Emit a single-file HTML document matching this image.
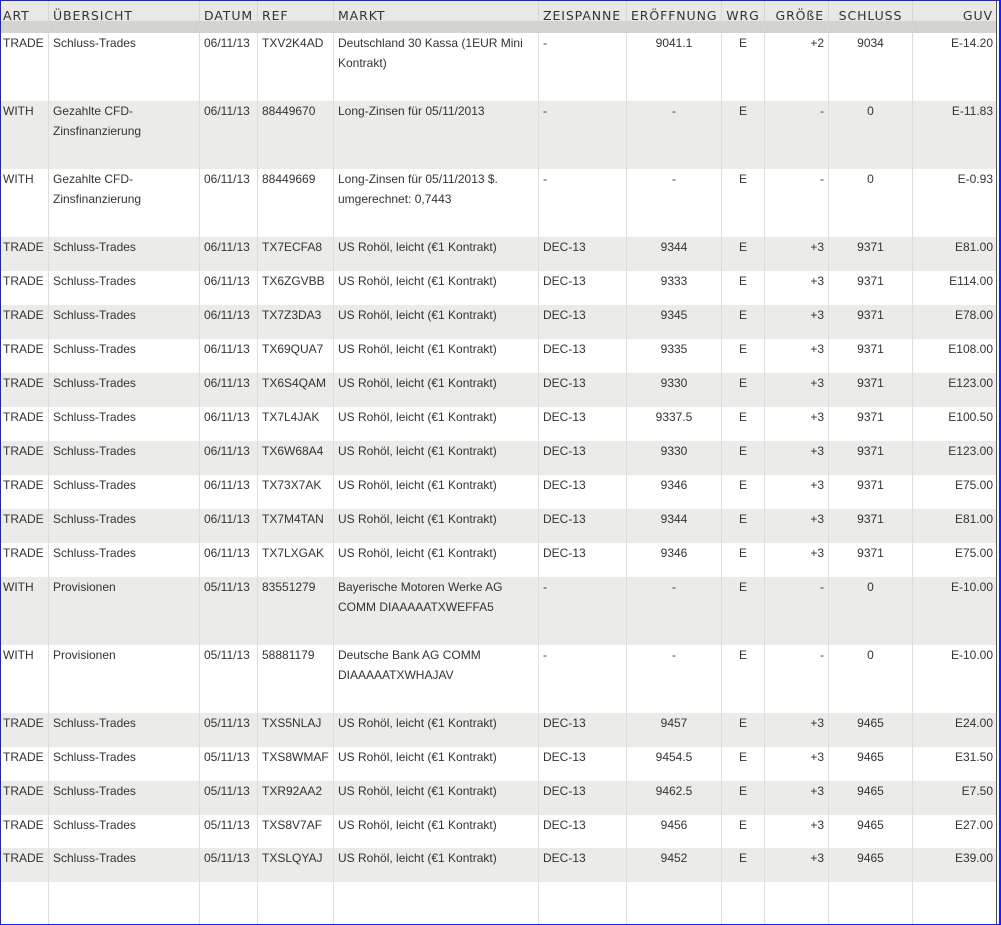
<!DOCTYPE html>
<html><head><meta charset="utf-8"><style>
*{box-sizing:border-box;margin:0;padding:0}
body{width:1001px;height:925px;overflow:hidden;background:#fff;font-family:"Liberation Sans",Arial,sans-serif;font-size:12px;color:#333;position:relative}
#frame{position:absolute;left:0;top:0;width:1001px;height:925px;border:1px solid #1a1aff;border-right:2px solid #1a1aff;pointer-events:none;z-index:5}
#rline{position:absolute;left:996px;top:0;width:1px;height:925px;background:#555;z-index:4}
.row{display:flex;position:absolute;left:0;width:997px}
.c{height:100%;border-left:1px solid #ddd;padding:0 4px;line-height:20px;overflow:hidden}
.c:first-child{border-left:none;padding-left:3px}
.w0{width:48px}.w1{width:151px}.w2{width:58px}.w3{width:76px}.w4{width:205px}.w5{width:88px}.w6{width:95px;text-align:center}.w7{width:43px;text-align:center}.w8{width:64px;text-align:right}.w9{width:84px;text-align:center}.w10{width:85px;text-align:right}
.hd .c{font-family:"DejaVu Sans",sans-serif;font-size:12.5px;letter-spacing:.9px;color:#333;line-height:32px;border-left-color:#d6d6d2;height:32px;white-space:nowrap;overflow:visible}
.band{position:absolute;left:0;top:21px;width:997px;height:12px;background:#d3d3cf}
.g{background:#ebebe7}
</style></head><body>
<div style="position:absolute;left:0;top:0;width:997px;height:21px;background:#e8e8e4"></div>
<div class="band"></div>
<div class="row hd" style="top:0;height:32px">
<div class="c w0">ART</div><div class="c w1">ÜBERSICHT</div><div class="c w2">DATUM</div><div class="c w3">REF</div><div class="c w4">MARKT</div><div class="c w5">ZEISPANNE</div><div class="c w6" style="text-align:left">ERÖFFNUNG</div><div class="c w7">WRG</div><div class="c w8">GRÖßE</div><div class="c w9">SCHLUSS</div><div class="c w10">GUV</div>
</div>

<div class="row" style="top:33px;height:68px"><div class="c w0">TRADE</div><div class="c w1">Schluss-Trades</div><div class="c w2">06/11/13</div><div class="c w3">TXV2K4AD</div><div class="c w4">Deutschland 30 Kassa (1EUR Mini Kontrakt)</div><div class="c w5">-</div><div class="c w6">9041.1</div><div class="c w7">E</div><div class="c w8">+2</div><div class="c w9">9034</div><div class="c w10">E-14.20</div></div>
<div class="row g" style="top:101px;height:68px"><div class="c w0">WITH</div><div class="c w1">Gezahlte CFD-Zinsfinanzierung</div><div class="c w2">06/11/13</div><div class="c w3">88449670</div><div class="c w4">Long-Zinsen für 05/11/2013</div><div class="c w5">-</div><div class="c w6">-</div><div class="c w7">E</div><div class="c w8">-</div><div class="c w9">0</div><div class="c w10">E-11.83</div></div>
<div class="row" style="top:169px;height:68px"><div class="c w0">WITH</div><div class="c w1">Gezahlte CFD-Zinsfinanzierung</div><div class="c w2">06/11/13</div><div class="c w3">88449669</div><div class="c w4">Long-Zinsen für 05/11/2013 $. umgerechnet: 0,7443</div><div class="c w5">-</div><div class="c w6">-</div><div class="c w7">E</div><div class="c w8">-</div><div class="c w9">0</div><div class="c w10">E-0.93</div></div>
<div class="row g" style="top:237px;height:34px"><div class="c w0">TRADE</div><div class="c w1">Schluss-Trades</div><div class="c w2">06/11/13</div><div class="c w3">TX7ECFA8</div><div class="c w4">US Rohöl, leicht (€1 Kontrakt)</div><div class="c w5">DEC-13</div><div class="c w6">9344</div><div class="c w7">E</div><div class="c w8">+3</div><div class="c w9">9371</div><div class="c w10">E81.00</div></div>
<div class="row" style="top:271px;height:34px"><div class="c w0">TRADE</div><div class="c w1">Schluss-Trades</div><div class="c w2">06/11/13</div><div class="c w3">TX6ZGVBB</div><div class="c w4">US Rohöl, leicht (€1 Kontrakt)</div><div class="c w5">DEC-13</div><div class="c w6">9333</div><div class="c w7">E</div><div class="c w8">+3</div><div class="c w9">9371</div><div class="c w10">E114.00</div></div>
<div class="row g" style="top:305px;height:34px"><div class="c w0">TRADE</div><div class="c w1">Schluss-Trades</div><div class="c w2">06/11/13</div><div class="c w3">TX7Z3DA3</div><div class="c w4">US Rohöl, leicht (€1 Kontrakt)</div><div class="c w5">DEC-13</div><div class="c w6">9345</div><div class="c w7">E</div><div class="c w8">+3</div><div class="c w9">9371</div><div class="c w10">E78.00</div></div>
<div class="row" style="top:339px;height:34px"><div class="c w0">TRADE</div><div class="c w1">Schluss-Trades</div><div class="c w2">06/11/13</div><div class="c w3">TX69QUA7</div><div class="c w4">US Rohöl, leicht (€1 Kontrakt)</div><div class="c w5">DEC-13</div><div class="c w6">9335</div><div class="c w7">E</div><div class="c w8">+3</div><div class="c w9">9371</div><div class="c w10">E108.00</div></div>
<div class="row g" style="top:373px;height:34px"><div class="c w0">TRADE</div><div class="c w1">Schluss-Trades</div><div class="c w2">06/11/13</div><div class="c w3">TX6S4QAM</div><div class="c w4">US Rohöl, leicht (€1 Kontrakt)</div><div class="c w5">DEC-13</div><div class="c w6">9330</div><div class="c w7">E</div><div class="c w8">+3</div><div class="c w9">9371</div><div class="c w10">E123.00</div></div>
<div class="row" style="top:407px;height:34px"><div class="c w0">TRADE</div><div class="c w1">Schluss-Trades</div><div class="c w2">06/11/13</div><div class="c w3">TX7L4JAK</div><div class="c w4">US Rohöl, leicht (€1 Kontrakt)</div><div class="c w5">DEC-13</div><div class="c w6">9337.5</div><div class="c w7">E</div><div class="c w8">+3</div><div class="c w9">9371</div><div class="c w10">E100.50</div></div>
<div class="row g" style="top:441px;height:34px"><div class="c w0">TRADE</div><div class="c w1">Schluss-Trades</div><div class="c w2">06/11/13</div><div class="c w3">TX6W68A4</div><div class="c w4">US Rohöl, leicht (€1 Kontrakt)</div><div class="c w5">DEC-13</div><div class="c w6">9330</div><div class="c w7">E</div><div class="c w8">+3</div><div class="c w9">9371</div><div class="c w10">E123.00</div></div>
<div class="row" style="top:475px;height:34px"><div class="c w0">TRADE</div><div class="c w1">Schluss-Trades</div><div class="c w2">06/11/13</div><div class="c w3">TX73X7AK</div><div class="c w4">US Rohöl, leicht (€1 Kontrakt)</div><div class="c w5">DEC-13</div><div class="c w6">9346</div><div class="c w7">E</div><div class="c w8">+3</div><div class="c w9">9371</div><div class="c w10">E75.00</div></div>
<div class="row g" style="top:509px;height:34px"><div class="c w0">TRADE</div><div class="c w1">Schluss-Trades</div><div class="c w2">06/11/13</div><div class="c w3">TX7M4TAN</div><div class="c w4">US Rohöl, leicht (€1 Kontrakt)</div><div class="c w5">DEC-13</div><div class="c w6">9344</div><div class="c w7">E</div><div class="c w8">+3</div><div class="c w9">9371</div><div class="c w10">E81.00</div></div>
<div class="row" style="top:543px;height:34px"><div class="c w0">TRADE</div><div class="c w1">Schluss-Trades</div><div class="c w2">06/11/13</div><div class="c w3">TX7LXGAK</div><div class="c w4">US Rohöl, leicht (€1 Kontrakt)</div><div class="c w5">DEC-13</div><div class="c w6">9346</div><div class="c w7">E</div><div class="c w8">+3</div><div class="c w9">9371</div><div class="c w10">E75.00</div></div>
<div class="row g" style="top:577px;height:68px"><div class="c w0">WITH</div><div class="c w1">Provisionen</div><div class="c w2">05/11/13</div><div class="c w3">83551279</div><div class="c w4">Bayerische Motoren Werke AG COMM DIAAAAATXWEFFA5</div><div class="c w5">-</div><div class="c w6">-</div><div class="c w7">E</div><div class="c w8">-</div><div class="c w9">0</div><div class="c w10">E-10.00</div></div>
<div class="row" style="top:645px;height:68px"><div class="c w0">WITH</div><div class="c w1">Provisionen</div><div class="c w2">05/11/13</div><div class="c w3">58881179</div><div class="c w4">Deutsche Bank AG COMM DIAAAAATXWHAJAV</div><div class="c w5">-</div><div class="c w6">-</div><div class="c w7">E</div><div class="c w8">-</div><div class="c w9">0</div><div class="c w10">E-10.00</div></div>
<div class="row g" style="top:713px;height:34px"><div class="c w0">TRADE</div><div class="c w1">Schluss-Trades</div><div class="c w2">05/11/13</div><div class="c w3">TXS5NLAJ</div><div class="c w4">US Rohöl, leicht (€1 Kontrakt)</div><div class="c w5">DEC-13</div><div class="c w6">9457</div><div class="c w7">E</div><div class="c w8">+3</div><div class="c w9">9465</div><div class="c w10">E24.00</div></div>
<div class="row" style="top:747px;height:34px"><div class="c w0">TRADE</div><div class="c w1">Schluss-Trades</div><div class="c w2">05/11/13</div><div class="c w3">TXS8WMAF</div><div class="c w4">US Rohöl, leicht (€1 Kontrakt)</div><div class="c w5">DEC-13</div><div class="c w6">9454.5</div><div class="c w7">E</div><div class="c w8">+3</div><div class="c w9">9465</div><div class="c w10">E31.50</div></div>
<div class="row g" style="top:781px;height:34px"><div class="c w0">TRADE</div><div class="c w1">Schluss-Trades</div><div class="c w2">05/11/13</div><div class="c w3">TXR92AA2</div><div class="c w4">US Rohöl, leicht (€1 Kontrakt)</div><div class="c w5">DEC-13</div><div class="c w6">9462.5</div><div class="c w7">E</div><div class="c w8">+3</div><div class="c w9">9465</div><div class="c w10">E7.50</div></div>
<div class="row" style="top:815px;height:33px"><div class="c w0">TRADE</div><div class="c w1">Schluss-Trades</div><div class="c w2">05/11/13</div><div class="c w3">TXS8V7AF</div><div class="c w4">US Rohöl, leicht (€1 Kontrakt)</div><div class="c w5">DEC-13</div><div class="c w6">9456</div><div class="c w7">E</div><div class="c w8">+3</div><div class="c w9">9465</div><div class="c w10">E27.00</div></div>
<div class="row g" style="top:848px;height:34px"><div class="c w0">TRADE</div><div class="c w1">Schluss-Trades</div><div class="c w2">05/11/13</div><div class="c w3">TXSLQYAJ</div><div class="c w4">US Rohöl, leicht (€1 Kontrakt)</div><div class="c w5">DEC-13</div><div class="c w6">9452</div><div class="c w7">E</div><div class="c w8">+3</div><div class="c w9">9465</div><div class="c w10">E39.00</div></div>
<div class="row" style="top:882px;height:43px"><div class="c w0"></div><div class="c w1"></div><div class="c w2"></div><div class="c w3"></div><div class="c w4"></div><div class="c w5"></div><div class="c w6"></div><div class="c w7"></div><div class="c w8"></div><div class="c w9"></div><div class="c w10"></div></div>
<div id="rline"></div>
<div id="frame"></div>
</body></html>
